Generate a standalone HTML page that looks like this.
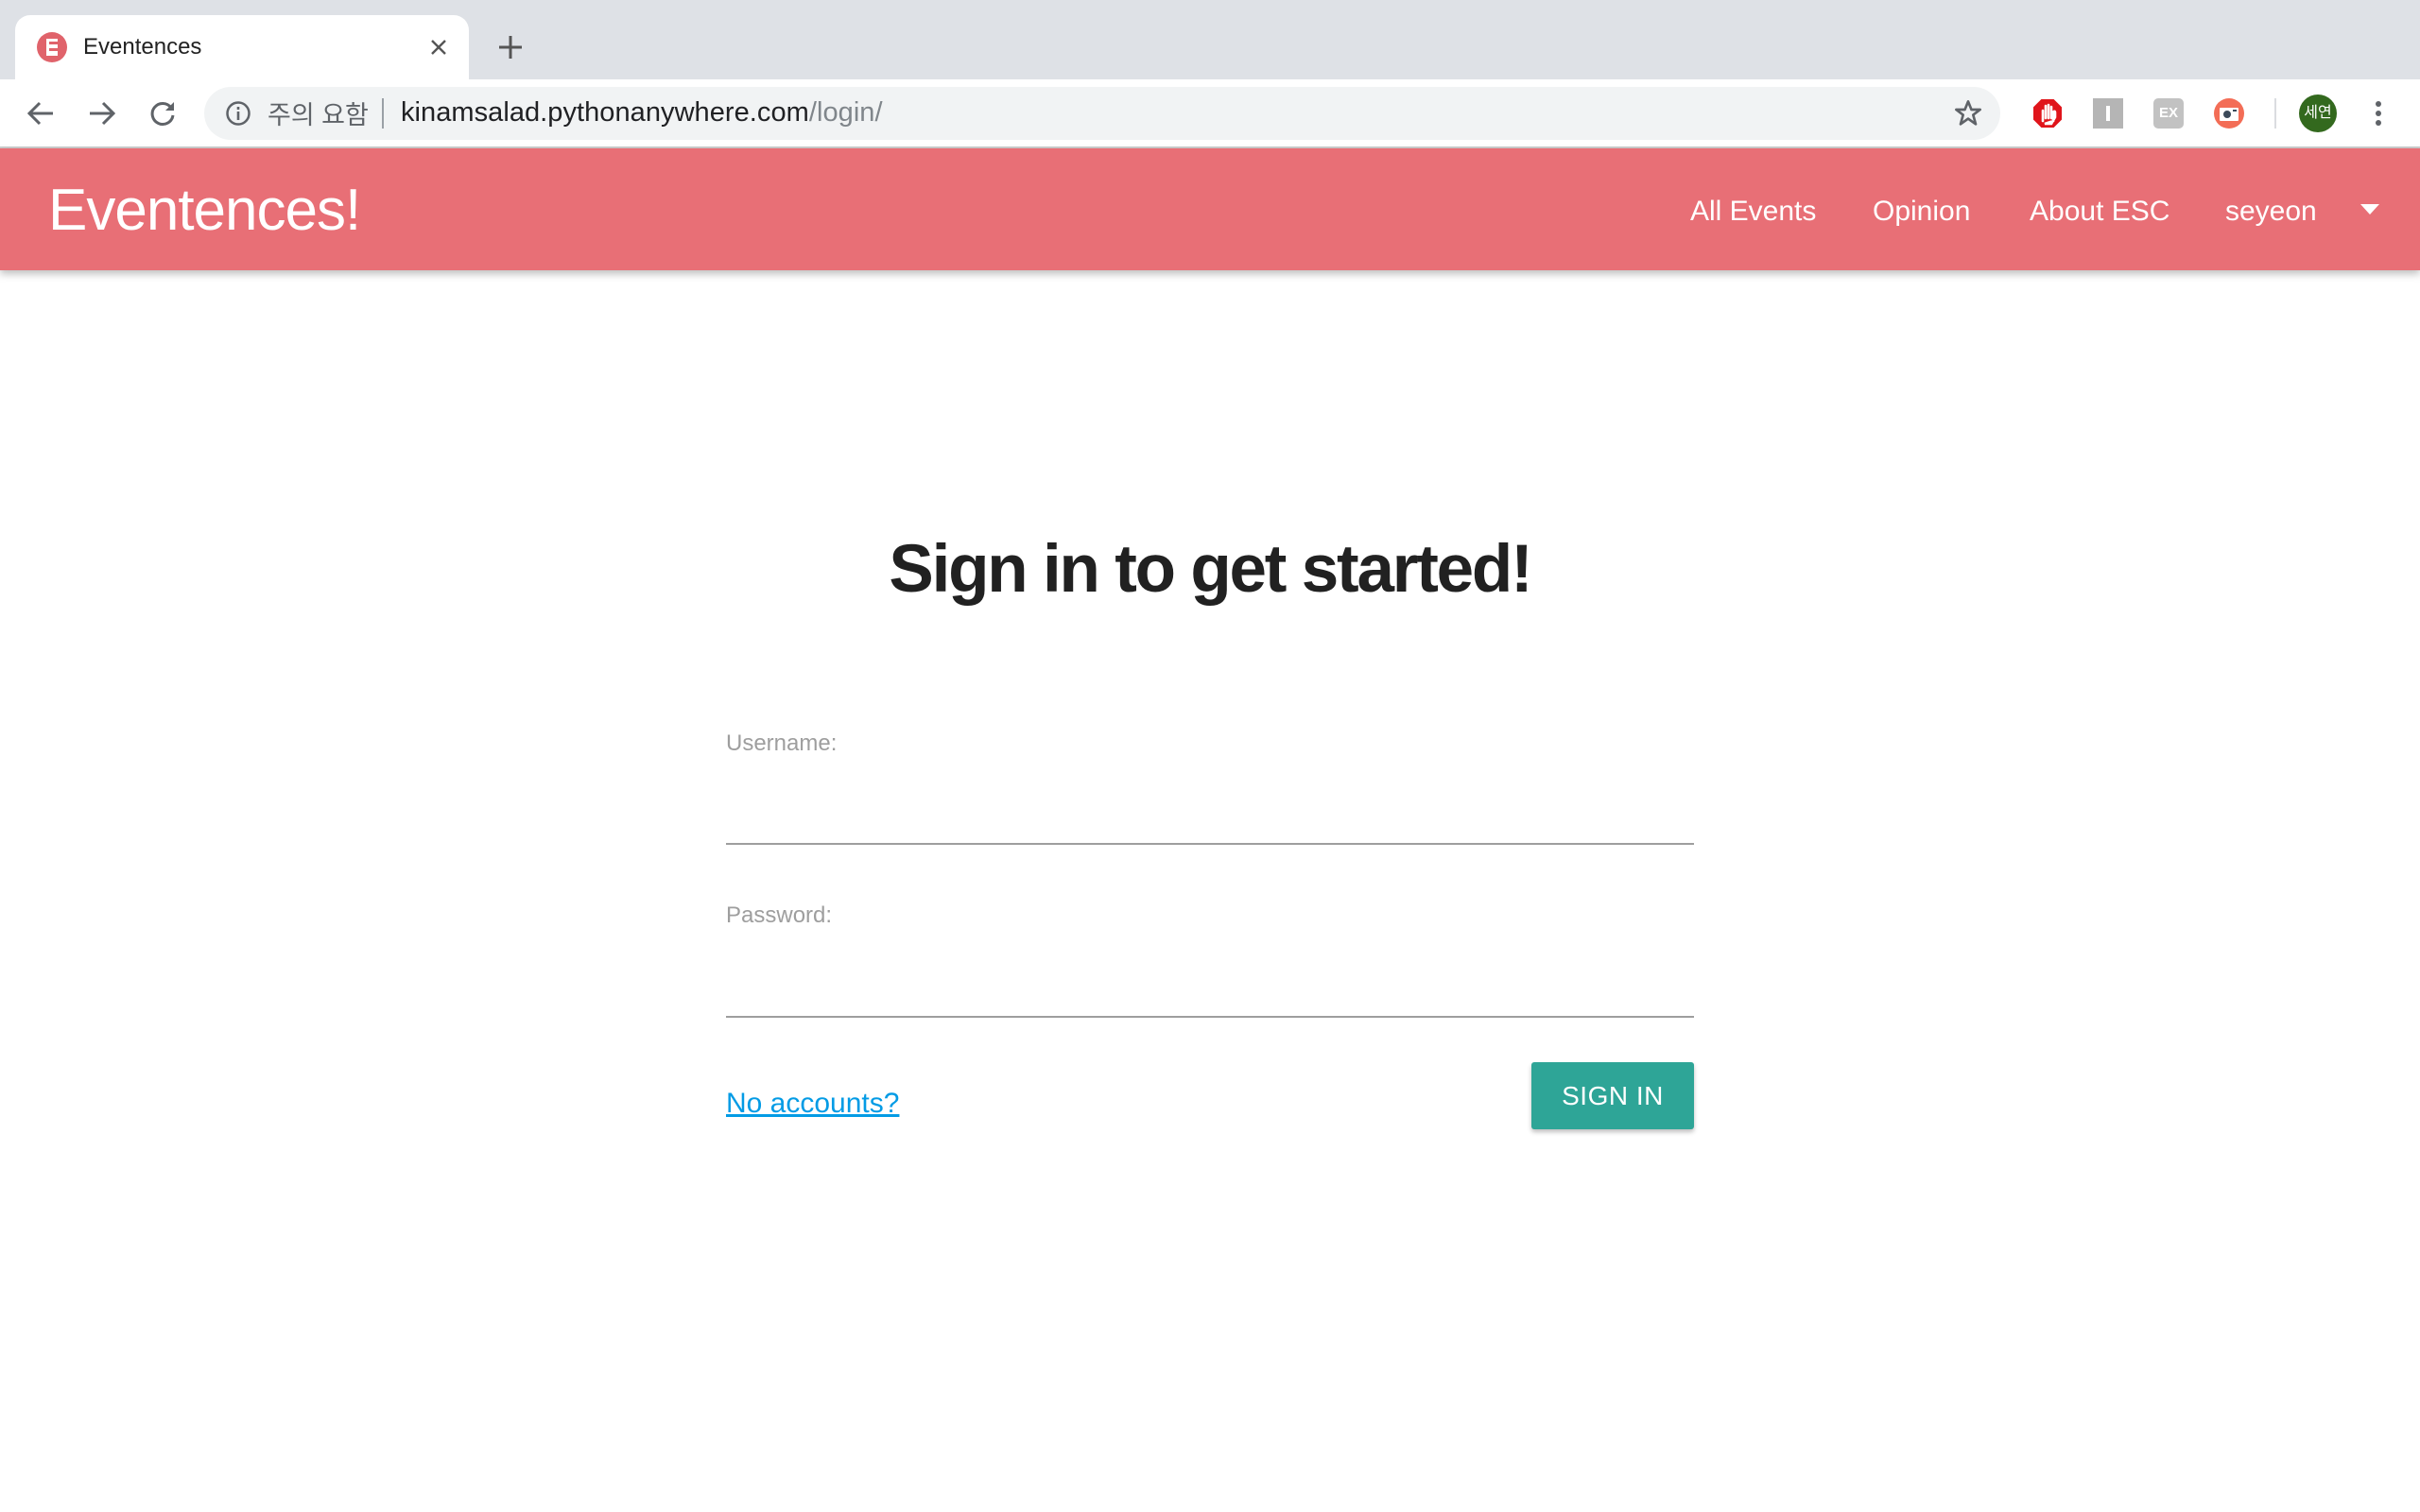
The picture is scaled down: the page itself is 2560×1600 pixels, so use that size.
<!DOCTYPE html>
<html><head><meta charset="utf-8"><style>
*{margin:0;padding:0;box-sizing:border-box}
body{width:2560px;height:1600px;overflow:hidden;background:#fff;font-family:"Liberation Sans","Noto Sans CJK KR",sans-serif;position:relative}
.abs{position:absolute}
.tabstrip{left:0;top:0;width:2560px;height:84px;background:#dee1e6}
.tab{left:16px;top:16px;width:480px;height:68px;background:#fff;border-radius:16px 16px 0 0}
.toolbar{left:0;top:84px;width:2560px;height:73px;background:#fff;border-bottom:2px solid #ccc}
.omni{left:216px;top:92px;width:1900px;height:56px;background:#f1f3f4;border-radius:28px}
.nav{left:0;top:157px;width:2560px;height:129px;background:#e86f76;box-shadow:0 4px 8px rgba(0,0,0,.25)}
.navtxt{color:#fff;font-size:30px;top:206px;line-height:36px}
</style></head><body>
<div class="abs tabstrip"></div>
<div class="abs tab"></div>
<svg class="abs" style="left:38px;top:33px" width="34" height="34" viewBox="0 0 34 34"><circle cx="17" cy="17" r="16" fill="#e0636b"/><rect x="11" y="8" width="12" height="18" fill="#fff"/><rect x="14" y="11" width="9" height="3" fill="#e0636b"/><rect x="14" y="18" width="9" height="3" fill="#e0636b"/></svg>
<div class="abs" style="left:88px;top:36px;font-size:24px;color:#222">Eventences</div>
<svg class="abs" style="left:455px;top:41px" width="18" height="18"><path d="M2 2L16 16M16 2L2 16" stroke="#555" stroke-width="2.4"/></svg>
<svg class="abs" style="left:527px;top:37px" width="26" height="26"><path d="M13 1V25M1 13H25" stroke="#555" stroke-width="3"/></svg>
<div class="abs toolbar"></div>
<svg class="abs" style="left:28px;top:106px" width="30" height="28"><path d="M28 14H4M14 3L3 14L14 25" stroke="#5f6368" stroke-width="3" fill="none"/></svg>
<svg class="abs" style="left:93px;top:106px" width="30" height="28"><path d="M2 14H26M16 3L27 14L16 25" stroke="#5f6368" stroke-width="3" fill="none"/></svg>
<svg class="abs" style="left:157px;top:105px" width="30" height="30"><path d="M24 9A11 11 0 1 0 26 17" stroke="#5f6368" stroke-width="3" fill="none"/><path d="M27 3V12H18Z" fill="#5f6368"/></svg>
<div class="abs omni"></div>
<svg class="abs" style="left:238px;top:106px" width="28" height="28"><circle cx="14" cy="14" r="11.5" stroke="#5f6368" stroke-width="2.5" fill="none"/><rect x="12.7" y="12" width="2.6" height="9" fill="#5f6368"/><rect x="12.7" y="7" width="2.6" height="3" fill="#5f6368"/></svg>
<div class="abs" style="left:283px;top:100px;font-size:27px;color:#5f6368">주의 요함</div>
<div class="abs" style="left:404px;top:104px;width:2px;height:32px;background:#9aa0a6"></div>
<div class="abs" style="left:424px;top:103px;font-size:29px;color:#202124;letter-spacing:0.05px">kinamsalad.pythonanywhere.com<span style="color:#80868b">/login/</span></div>
<svg class="abs" style="left:2066px;top:104px" width="32" height="32" viewBox="0 0 24 24"><path d="M12 2.5L14.6 9H21.5L16 13.2L18 20.5L12 16.2L6 20.5L8 13.2L2.5 9H9.4Z" stroke="#5f6368" stroke-width="2" fill="none" stroke-linejoin="round"/></svg>
<svg class="abs" style="left:2150px;top:104px" width="32" height="32" viewBox="0 0 32 32"><path d="M9.4 1H22.6L31 9.4V22.6L22.6 31H9.4L1 22.6V9.4Z" fill="#e0151b"/><path d="M11 24V13M14 21V8M17 21V7M20 21V9M22 24V15C22 14 24 13 24 15V20L20 27H13Z" stroke="#fff" stroke-width="2.6" fill="#fff" stroke-linecap="round"/></svg>
<div class="abs" style="left:2214px;top:104px;width:32px;height:32px;background:#b5b5b5"><div style="position:absolute;left:14px;top:8px;width:4px;height:16px;background:#fff"></div></div>
<div class="abs" style="left:2278px;top:104px;width:32px;height:32px;background:#c2c2c2;border-radius:5px;color:#fff;font-size:15px;font-weight:bold;text-align:center;line-height:32px">EX</div>
<svg class="abs" style="left:2342px;top:104px" width="32" height="32"><circle cx="16" cy="16" r="16" fill="#f36d56"/><rect x="6" y="10" width="20" height="14" rx="1" fill="#fff"/><circle cx="14" cy="17" r="4" fill="#3c4a5a"/><rect x="20" y="12" width="4" height="2" fill="#3c4a5a"/></svg>
<div class="abs" style="left:2406px;top:104px;width:2px;height:32px;background:#dadce0"></div>
<div class="abs" style="left:2432px;top:100px;width:40px;height:40px;border-radius:50%;background:#33691e;color:#fff;font-size:16px;text-align:center;line-height:40px">세연</div>
<svg class="abs" style="left:2510px;top:106px" width="12" height="28"><circle cx="6" cy="4" r="3" fill="#5f6368"/><circle cx="6" cy="14" r="3" fill="#5f6368"/><circle cx="6" cy="24" r="3" fill="#5f6368"/></svg>
<div class="abs nav"></div>
<div class="abs" style="left:51px;top:187px;font-size:62px;line-height:72px;color:#fff;letter-spacing:-1px">Eventences!</div>
<div class="abs navtxt" style="left:1788px">All Events</div>
<div class="abs navtxt" style="left:1981px">Opinion</div>
<div class="abs navtxt" style="left:2147px">About ESC</div>
<div class="abs navtxt" style="left:2354px">seyeon</div>
<svg class="abs" style="left:2497px;top:216px" width="20" height="12"><path d="M0 0H20L10 11Z" fill="#fff"/></svg>
<div class="abs" style="left:0;top:558px;width:2560px;text-align:center;font-size:71px;font-weight:bold;color:#212121;line-height:90px;letter-spacing:-2.2px">Sign in to get started!</div>
<div class="abs" style="left:768px;top:773px;font-size:24px;color:#9e9e9e">Username:</div>
<div class="abs" style="left:768px;top:892px;width:1024px;height:2px;background:#9e9e9e"></div>
<div class="abs" style="left:768px;top:955px;font-size:24px;color:#9e9e9e">Password:</div>
<div class="abs" style="left:768px;top:1075px;width:1024px;height:2px;background:#9e9e9e"></div>
<div class="abs" style="left:768px;top:1151px;font-size:30px;color:#039be5;text-decoration:underline">No accounts?</div>
<div class="abs" style="left:1620px;top:1124px;width:172px;height:71px;background:#2ea597;border-radius:3px;box-shadow:0 3px 5px rgba(0,0,0,.25);color:#fff;font-size:28px;text-align:center;line-height:71px;letter-spacing:0.5px">SIGN IN</div>
</body></html>
